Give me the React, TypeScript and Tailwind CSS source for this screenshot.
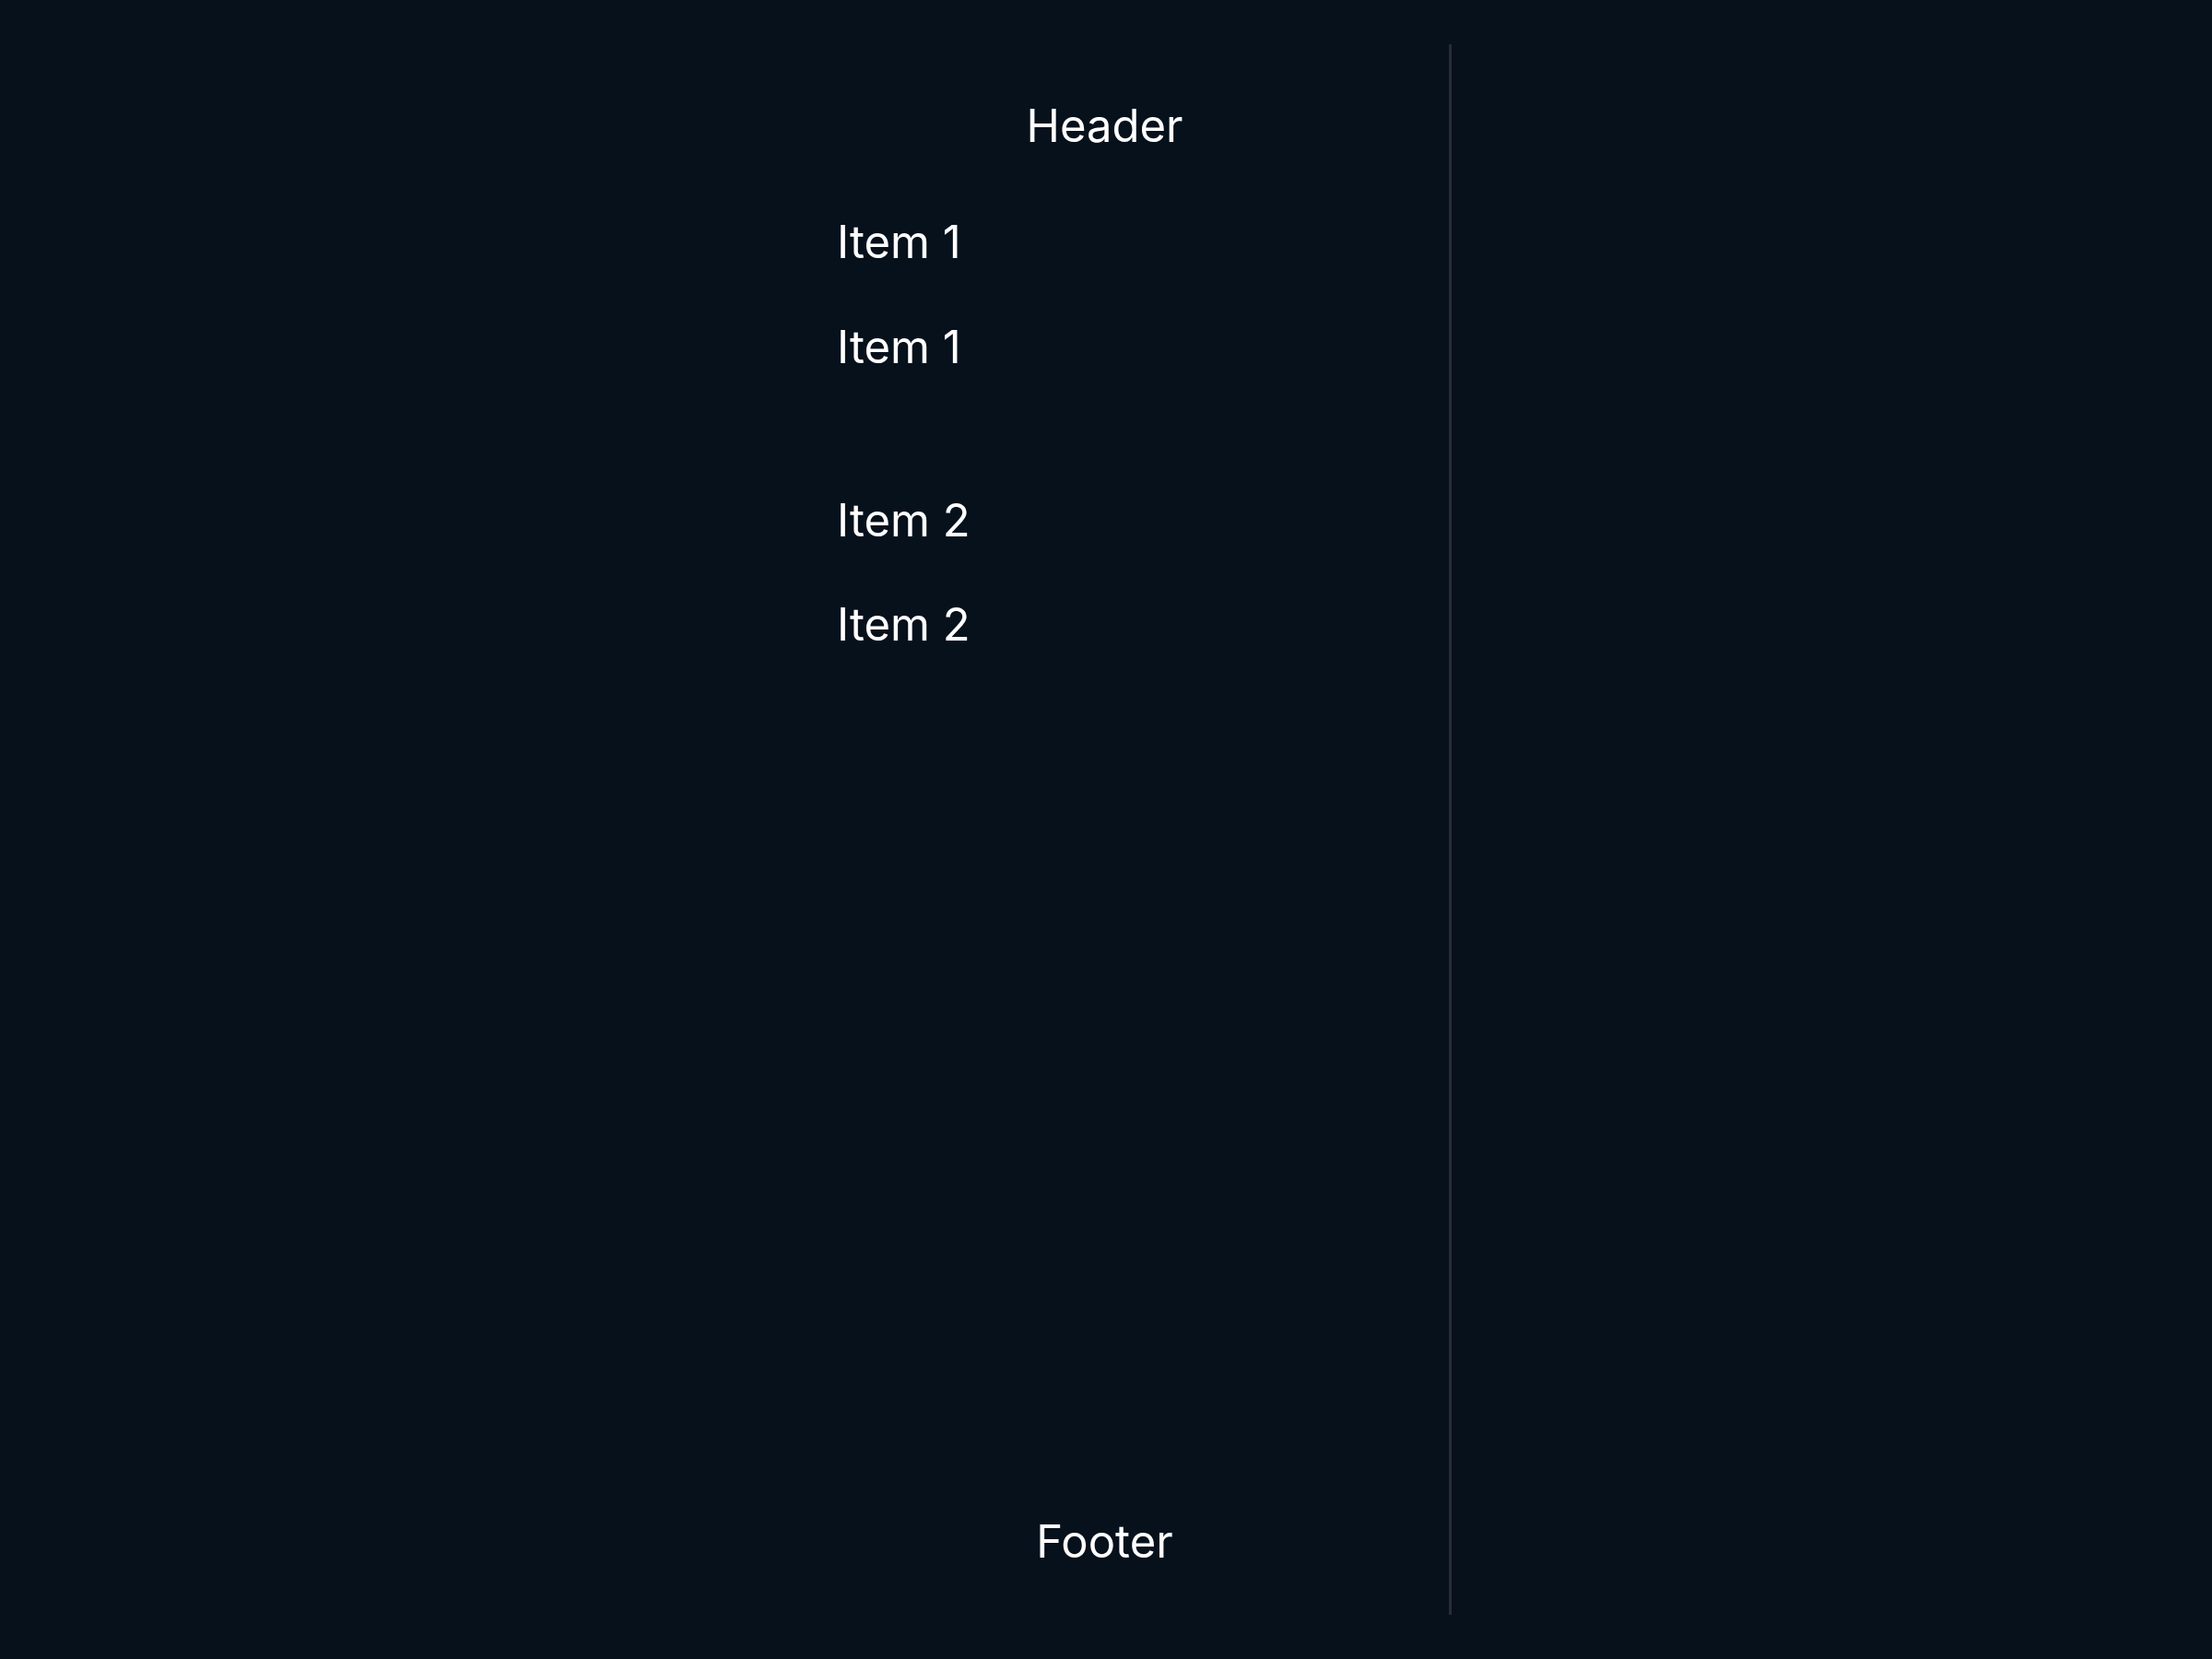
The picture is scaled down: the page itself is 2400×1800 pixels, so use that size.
export default function App() {
  return (
    <div
      className="min-h-screen bg-[#07111c] flex justify-center py-[48px]"
      style={{ fontFamily: 'Inter, "Noto Sans", sans-serif' }}
    >
      <div className="w-[750px] h-[1704px] border-r-[3px] border-[#2a2c30] flex flex-col text-[49px] leading-[75px] text-white">
        <div className="pt-[51px] text-center">Header</div>

        <div className="mt-[51px] pl-[83px] flex flex-col gap-[113px]">
          <div className="flex flex-col gap-[39px]">
            <div>Item 1</div>
            <div>Item 1</div>
          </div>
          <div className="flex flex-col gap-[38px]">
            <div>Item 2</div>
            <div>Item 2</div>
          </div>
        </div>

        <div className="mt-auto pb-[42px] text-center">Footer</div>
      </div>
    </div>
  )
}
